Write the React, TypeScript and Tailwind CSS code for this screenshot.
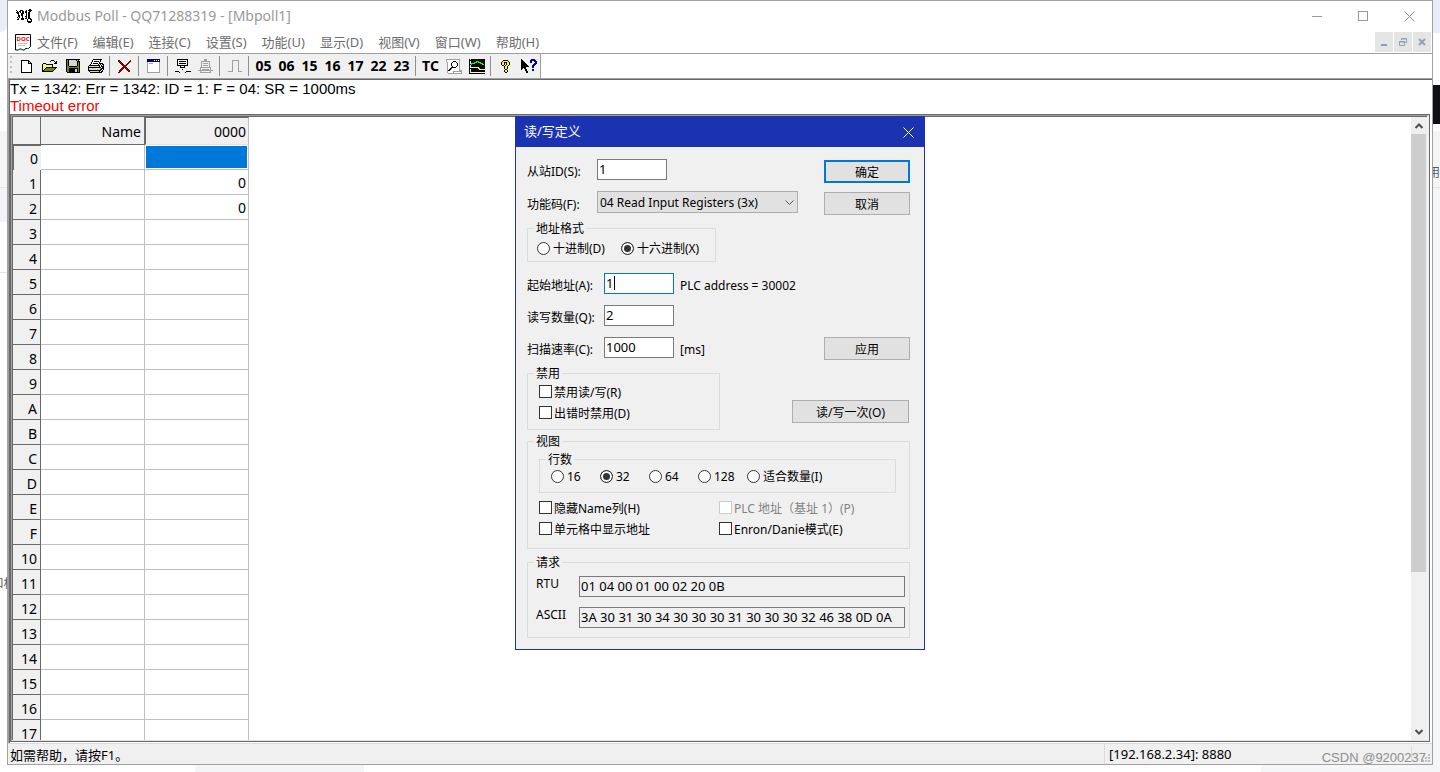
import type { ReactNode } from "react";

const PALETTE: Record<string, string> = {
  k: "#000000",
  w: "#ffffff",
  y: "#808000",
  Y: "#ffff00",
  g: "#a0a0a0",
  l: "#d4d4d4",
  r: "#800000",
  R: "#ff0000",
  b: "#000080",
  B: "#0000a8",
  c: "#008080",
  G: "#00ff00",
};

function PixelIcon({ rows }: { rows: string[] }) {
  const width = Math.max(...rows.map((r) => r.length));
  return (
    <svg
      width={width}
      height={rows.length}
      viewBox={`0 0 ${width} ${rows.length}`}
      shapeRendering="crispEdges"
      aria-hidden="true"
    >
      {rows.flatMap((row, y) =>
        row
          .split("")
          .map((ch, x) =>
            PALETTE[ch] ? (
              <rect key={`${x}-${y}`} x={x} y={y} width={1} height={1} fill={PALETTE[ch]} />
            ) : null
          )
      )}
    </svg>
  );
}

const APP_ICON = [
  ".............kk.",
  "k...kkk...k.kkkk",
  ".k.kk.kk.kk..kk.",
  "kkk.k.kk.kk.kk..",
  ".kk..kkk..k.kk..",
  "..k..kk...k.kk..",
  "..kk.kk...k.kk..",
  "..kk..k..kk.kk..",
  ".k.k..k...k.kk..",
  "..k..kkk.kk.kkk.",
  ".kk..kkk...kwwkk",
  "...........kwwwk",
  "...........kkkkk",
  "............kkk.",
];

const NEW_ICON = [
  "kkkkkkkk...",
  "kwwwwwwkk..",
  "kwwwwwwkwk.",
  "kwwwwwwkkkk",
  "kwwwwwwwwwk",
  "kwwwwwwwwwk",
  "kwwwwwwwwwk",
  "kwwwwwwwwwk",
  "kwwwwwwwwwk",
  "kwwwwwwwwwk",
  "kwwwwwwwwwk",
  "kwwwwwwwwwk",
  "kkkkkkkkkkk",
];

const OPEN_ICON = [
  ".........kkk....",
  "........k...k.k.",
  ".............kk.",
  ".kkk........kkk.",
  "kYwYkkkkkkk.....",
  "kwYwYwYwYwk.....",
  "kYwYwYwYwYk.....",
  "kwYwkkkkkkkkkkk.",
  "kYwkyyyyyyyyyk..",
  "kwkyyyyyyyyyk...",
  "kkyyyyyyyyyk....",
  "kkkkkkkkkkk.....",
];

const SAVE_ICON = [
  "kkkkkkkkkkkkkk",
  "kyklllllllklk.",
  "kykllllllllkkk",
  "kykllllllllkyk",
  "kykllllllllkyk",
  "kykllllllllkyk",
  "kykllllllllkyk",
  "kyykkkkkkkkyyk",
  "kyyyyyyyyyyyyk",
  "kyykkkkkkkkkyk",
  "kyykkkkkkllkyk",
  "kyykkkkkkllkyk",
  "kyykkkkkkllkyk",
  ".kkkkkkkkkkkkk",
];

const PRINT_ICON = [
  ".....kkkkkkkkk..",
  "....kwwwwwwwk...",
  "....kwkkkkkwk...",
  "...kwwwwwwwk....",
  "...kwkkkkkwkkkk.",
  "..kwwwwwwwk.k.kk",
  ".kkkkkkkkkkk.k.k",
  "kllllllllllk.kkk",
  "kkkkkkkkkkkkk.kk",
  "kllllllYYYlllkkk",
  "klllllllllllkk.k",
  "kkkkkkkkkkkkk.k.",
  ".klllllllllk.kk.",
  "..kkkkkkkkkkkk..",
];

const CUT_ICON = [
  "rr..........r.",
  "rrr........rr.",
  ".rrr......rr..",
  "..rrr....rr...",
  "...rrr..rr....",
  "....rrrrr.....",
  ".....rrr......",
  "....rrrrr.....",
  "...rrr.rrr....",
  "..rrr...rrr...",
  ".rrr.....rrr..",
  ".rr.......rr..",
  "rr............",
];

const WINDOW_ICON = [
  "bbbbbbbbbbbbb",
  "bbbbbbbwbwbwb",
  "bbbbbbbbbbbbb",
  "gwwwwwwwwwwwg",
  "gwggggwwwwwwg",
  "gwwwwwwwwwwwg",
  "gwwwwwwwwwwwg",
  "gwwwwwwwwwwwg",
  "gwwwwwwwwwwwg",
  "gwwwwwwwwwwwg",
  "gwwwwwwwwwwwg",
  "gwwwwwwwwwwwg",
  "gwwwwwwwwwwwg",
  "ggggggggggggg",
];

const CONNECT_ICON = [
  "..kkkkkkkkkkk...",
  "..k.........k...",
  "..k.kkkkkkk.k...",
  "..k.........k...",
  "..k.kkkkkkk.k...",
  "..k.........k...",
  "..kkkkkkkkkkk...",
  ".....k...k......",
  ".....kkkkk......",
  "................",
  ".......k........",
  "................",
  "kkkk.......kkkkk",
  "....k.....k.....",
];

const DISCONNECT_ICON = [
  "......ggg.......",
  "......ggg.......",
  "...ggggggggg....",
  "...g.......g....",
  "...g.ggggg.g....",
  "...g.......g....",
  "...g.ggggg.g....",
  "...g.......g....",
  "..ggggggggggg...",
  "..g.........g...",
  "..g.ggggggg.g...",
  "ggggggggggggggg.",
  "..g.........g...",
  "..ggggggggggg...",
];

const PULSE_ICON = [
  "....ggggggg...",
  "....g.....g...",
  "....g.....g...",
  "....g.....g...",
  "....g.....g...",
  "....g.....g...",
  "....g.....g...",
  "....g.....g...",
  "....g.....g...",
  "....g.....g...",
  "....g.....g...",
  "ggggg.....gggg",
];

const LOG_ICON = [
  "gggggggggggggg..",
  "gwwwwwwwwwwwwg..",
  "gwwwwwwkkkwwwg..",
  ".gwwwwkwwwkwwg..",
  ".gwwwkwwwwwkwg..",
  ".gwwwkwwwwwkwg..",
  ".gwwwkwwwwwkwg..",
  ".gwwwwkwwwkwwg..",
  ".gwwwkkkkkwwwg..",
  ".gwwkkwwwwwwwg..",
  ".gwkkwwwwwwwwg..",
  ".gkkwwwwwwwwwggg",
  ".gwwwwwggggggggg",
  ".gwwwwwgwwwwwwwg",
  "..gggggggggggggg",
];

const CHART_ICON = [
  "k.kkkkkkkkkkkkkk",
  "kkkkkkkkkkkkkkkk",
  "k.kkkkkGGGkkkkkk",
  "k.kkkGGGkGGGkkkk",
  "k.GGGGkkkkkGGGkk",
  "kkGkkkkkkkkkkGGk",
  "k.kkkkkkkkkkkkkk",
  "k.kkkkkkkkkkkkkk",
  "k.YYYYYYYYkkkkkk",
  "kkkkkkkkkYYkkkkk",
  "k.kkkkkkkkYYYYYY",
  "k.kkkkkkkkkkkkkk",
  "k.kkkkkkkkkkkkkk",
  "k...............",
  "kkkkkkkkkkkkkkkk",
];

const ABOUT_ICON = [
  "..kkkkk..",
  ".kYYYYYk.",
  "kYYkkkYYk",
  "kYYk.kYYk",
  "kYYk.kYYk",
  ".kk.kYYk.",
  "...kYYk..",
  "...kYYk..",
  "...kYYk..",
  "....kk...",
  "...kYYk..",
  "...kYYk..",
  "....kk...",
];

const HELP_ICON = [
  "k.........BBBB..",
  "kk.......BBBBBB.",
  "kkk......BB..BBB",
  "kkkk.....BB...BB",
  "kkkkk........BBB",
  "kkkkkk......BBB.",
  "kkkkkkk....BBB..",
  "kkkkkkkk...BB...",
  "kkkkk......BB...",
  "kk.kk...........",
  "k...kk.....BB...",
  "....kk.....BB...",
  ".....kk.........",
  ".....kk.........",
];

const MENU = [
  "文件(F)",
  "编辑(E)",
  "连接(C)",
  "设置(S)",
  "功能(U)",
  "显示(D)",
  "视图(V)",
  "窗口(W)",
  "帮助(H)",
];

const FUNCTION_CODES = ["05", "06", "15", "16", "17", "22", "23"];

function ToolButton({ label, children }: { label: string; children: ReactNode }) {
  return (
    <button
      type="button"
      aria-label={label}
      className="flex h-6 w-[23px] items-center justify-center text-sm font-bold text-black"
    >
      {children}
    </button>
  );
}

function ToolSeparator() {
  return <div className="mx-[2px] h-5 w-[2px] border-l border-[#909090]" />;
}

function TitleBar() {
  return (
    <header className="flex h-[30px] shrink-0 items-center pl-2">
      <PixelIcon rows={APP_ICON} />
      <h1 className="ml-[5px] flex-1 text-sm text-[#999999]">
        Modbus Poll - QQ71288319 - [Mbpoll1]
      </h1>
      <button type="button" aria-label="最小化" className="flex h-full w-[46px] items-center justify-center">
        <span className="h-px w-[10px] bg-[#999999]" />
      </button>
      <button type="button" aria-label="最大化" className="flex h-full w-[46px] items-center justify-center">
        <span className="size-[10px] border border-[#999999]" />
      </button>
      <button type="button" aria-label="关闭" className="flex h-full w-[46px] items-center justify-center">
        <svg width="11" height="11" viewBox="0 0 11 11" stroke="#8c8c8c" fill="none">
          <path d="M0.5 0.5l10 10M10.5 0.5l-10 10" />
        </svg>
      </button>
    </header>
  );
}

function MenuBar() {
  return (
    <nav className="flex h-[23px] shrink-0 items-center border-b border-[#a0a0a0] pl-[7px]">
      <svg width="16" height="17" viewBox="0 0 16 17" aria-hidden="true">
        <path d="M0.5 0.5h15v12l-2 2h-3l-1 1.5h-2l-1-1h-2l-1 1h-3z" fill="#fff" stroke="#000" />
        <path d="M3 9.5h9M3 11.5h7" stroke="#c0c0c0" />
        <path d="M12 14.5h2" stroke="#008080" />
        <text x="8" y="7" fontSize="6" fontWeight="700" textAnchor="middle" fill="#ff0000">
          DOC
        </text>
      </svg>
      <div className="flex flex-1 gap-[3px]">
        {MENU.map((item) => (
          <button key={item} type="button" className="px-[6px] text-[13px] leading-5 text-[#6d6d6d]">
            {item}
          </button>
        ))}
      </div>
      <div className="flex gap-px pr-px">
        <button type="button" aria-label="最小化文档" className="flex h-5 w-[18px] items-center justify-center bg-[#e5e5e5]">
          <svg width="8" height="8" viewBox="0 0 8 8">
            <path d="M1 6h6v2h-6z" fill="#91a1b5" />
          </svg>
        </button>
        <button type="button" aria-label="还原文档" className="flex h-5 w-[18px] items-center justify-center bg-[#e5e5e5]">
          <svg width="8" height="8" viewBox="0 0 8 8" fill="none" stroke="#91a1b5">
            <path d="M2.5 2v-1.5h5v4h-1.5M2 1h6M0 4h6M0.5 3.5h5v4h-5z" />
          </svg>
        </button>
        <button type="button" aria-label="关闭文档" className="flex h-5 w-[18px] items-center justify-center bg-[#e5e5e5]">
          <svg width="8" height="8" viewBox="0 0 8 8" stroke="#91a1b5" strokeWidth="2">
            <path d="M1 1l6 6M7 1l-6 6" />
          </svg>
        </button>
      </div>
    </nav>
  );
}

function Toolbar() {
  return (
    <div className="flex h-6 shrink-0">
      <div className="flex items-center border-r border-[#a0a0a0] bg-[#f0f0f0]">
        <div className="ml-[2px] mr-[3px] h-5 w-[2px] bg-[repeating-linear-gradient(#c0c0c0_0_2px,#f0f0f0_2px_5px)]" />
        <ToolButton label="新建"><PixelIcon rows={NEW_ICON} /></ToolButton>
        <ToolButton label="打开"><PixelIcon rows={OPEN_ICON} /></ToolButton>
        <ToolButton label="保存"><PixelIcon rows={SAVE_ICON} /></ToolButton>
        <ToolButton label="打印"><PixelIcon rows={PRINT_ICON} /></ToolButton>
        <ToolSeparator />
        <ToolButton label="删除"><PixelIcon rows={CUT_ICON} /></ToolButton>
        <ToolSeparator />
        <ToolButton label="读写定义"><PixelIcon rows={WINDOW_ICON} /></ToolButton>
        <ToolSeparator />
        <ToolButton label="连接"><PixelIcon rows={CONNECT_ICON} /></ToolButton>
        <ToolButton label="断开"><PixelIcon rows={DISCONNECT_ICON} /></ToolButton>
        <ToolSeparator />
        <ToolButton label="脉冲"><PixelIcon rows={PULSE_ICON} /></ToolButton>
        <ToolSeparator />
        {FUNCTION_CODES.map((code) => (
          <ToolButton key={code} label={code}>{code}</ToolButton>
        ))}
        <ToolSeparator />
        <ToolButton label="TC">TC</ToolButton>
        <ToolButton label="通讯记录"><PixelIcon rows={LOG_ICON} /></ToolButton>
        <ToolButton label="图表"><PixelIcon rows={CHART_ICON} /></ToolButton>
        <ToolSeparator />
        <ToolButton label="关于"><PixelIcon rows={ABOUT_ICON} /></ToolButton>
        <ToolButton label="帮助"><PixelIcon rows={HELP_ICON} /></ToolButton>
      </div>
    </div>
  );
}

const ROW_COUNT = 24;

function RegisterTable() {
  const rows = Array.from({ length: ROW_COUNT }, (_, i) => i);
  return (
    <table className="table-fixed border-separate border-spacing-0 self-start text-right text-sm leading-5 text-black">
      <colgroup>
        <col className="w-7" />
        <col className="w-[104px]" />
        <col className="w-[104px]" />
      </colgroup>
      <thead>
        <tr className="h-7 bg-[#f0f0f0]">
          <th className="border-b border-r border-[#696969]" />
          <th className="border-b border-r border-[#696969] pr-[3px] pt-[2px] font-normal">Name</th>
          <th className="border-b border-l border-r border-t border-b-[#e3e3e3] border-l-[#696969] border-r-[#c0c0c0] border-t-[#696969] pr-[2px] pt-[2px] font-normal">
            0000
          </th>
        </tr>
      </thead>
      <tbody>
        {rows.map((i) => (
          <tr key={i} className="h-[25px]">
            <th
              className={`bg-[#f0f0f0] pr-[3px] font-normal leading-5 ${
                i === 0
                  ? "border-l border-t border-[#696969] pt-[2px]"
                  : "border-b border-r border-[#696969] pt-[4px]"
              }`}
            >
              {i.toString(16).toUpperCase()}
            </th>
            <td className="border-b border-r border-[#c0c0c0]" />
            <td className="border-b border-r border-[#c0c0c0] p-px">
              {i === 0 ? (
                <div className="h-[22px] bg-[#0078d7]" />
              ) : (
                <span className="block h-[22px] pr-px pt-[2px]">{i < 3 ? "0" : ""}</span>
              )}
            </td>
          </tr>
        ))}
      </tbody>
    </table>
  );
}

function ScrollBar() {
  return (
    <div className="flex w-4 shrink-0 flex-col bg-[#f0f0f0]">
      <button type="button" aria-label="向上滚动" className="flex h-[17px] w-full items-center justify-center">
        <svg width="8" height="6" viewBox="0 0 8 6" fill="none" stroke="#505050" strokeWidth="2">
          <path d="M0.5 5L4 1.5L7.5 5" />
        </svg>
      </button>
      <div className="mr-px flex-[437] bg-[#cdcdcd]" />
      <div className="flex-[151]" />
      <button type="button" aria-label="向下滚动" className="flex h-[17px] w-full items-center justify-center">
        <svg width="8" height="6" viewBox="0 0 8 6" fill="none" stroke="#505050" strokeWidth="2">
          <path d="M0.5 1L4 4.5L7.5 1" />
        </svg>
      </button>
    </div>
  );
}

function Radio({ name, label, checked = false }: { name: string; label: string; checked?: boolean }) {
  return (
    <label className="flex items-center gap-[3px] whitespace-nowrap">
      <input
        type="radio"
        name={name}
        defaultChecked={checked}
        className="size-[13px] shrink-0 appearance-none rounded-full border border-[#333333] bg-white checked:bg-[#333333] checked:shadow-[inset_0_0_0_2px_#ffffff]"
      />
      <span className="pt-px">{label}</span>
    </label>
  );
}

function Check({ label, disabled = false }: { label: string; disabled?: boolean }) {
  return (
    <label className={`flex h-[21px] items-center gap-[2px] whitespace-nowrap ${disabled ? "text-[#838383]" : ""}`}>
      <input
        type="checkbox"
        disabled={disabled}
        className="size-[13px] shrink-0 appearance-none border border-[#333333] bg-white checked:bg-[#333333] disabled:border-[#cccccc]"
      />
      <span className="pt-[2px]">{label}</span>
    </label>
  );
}

function Group({ title, className, children }: { title: string; className: string; children: ReactNode }) {
  return (
    <fieldset className={`border border-[#dcdcdc] ${className}`}>
      <legend className="ml-[6px] px-[2px] pt-[2px] leading-[14px]">{title}</legend>
      {children}
    </fieldset>
  );
}

function DialogButton({ className = "", children }: { className?: string; children: ReactNode }) {
  return (
    <button
      type="button"
      className={`h-[23px] bg-[#e1e1e1] pt-[2px] ${className || "w-[86px] border border-[#adadad]"}`}
    >
      {children}
    </button>
  );
}

function NumberField({
  id,
  label,
  value,
  focused = false,
  after,
}: {
  id: string;
  label: string;
  value: string;
  focused?: boolean;
  after?: string;
}) {
  return (
    <div className="flex h-[21px] items-center whitespace-nowrap">
      <label htmlFor={id} className="w-[77px] shrink-0 pt-[5px]">
        {label}
      </label>
      <div className="relative shrink-0">
        <input
          id={id}
          defaultValue={value}
          className={`block h-[21px] w-[70px] border bg-white px-px pb-px text-[13px] outline-none ${
            focused ? "border-[#0078d7]" : "border-[#7a7a7a]"
          }`}
        />
        {focused && <span className="absolute left-[10px] top-[3px] h-[14px] w-px bg-black" />}
      </div>
      {after && <span className="ml-[6px] pt-1">{after}</span>}
    </div>
  );
}

function RequestField({ id, label, value }: { id: string; label: string; value: string }) {
  return (
    <div className="flex h-[21px] items-center">
      <label htmlFor={id} className="w-[43px] pb-[6px]">
        {label}
      </label>
      <input
        id={id}
        readOnly
        defaultValue={value}
        className="h-[21px] min-w-0 flex-1 border border-[#7a7a7a] bg-[#f0f0f0] px-px pb-px text-[13px] outline-none"
      />
    </div>
  );
}

function DefinitionDialog() {
  return (
    <section
      role="dialog"
      aria-label="读/写定义"
      className="w-[410px] border border-[#1b33b1] bg-[#f0f0f0] text-xs text-black"
    >
      <div className="flex h-[30px] items-center bg-[#1b33b1] pl-2 text-[13px] text-white">
        <h2 className="flex-1">读/写定义</h2>
        <button type="button" aria-label="关闭" className="flex h-full w-[31px] items-center justify-center">
          <svg width="11" height="11" viewBox="0 0 11 11" stroke="#ffffff" fill="none">
            <path d="M0.5 0.5l10 10M10.5 0.5l-10 10" />
          </svg>
        </button>
      </div>

      <form className="flex flex-col pb-[11px] pl-[11px] pr-[14px] pt-3">
        <div className="flex">
          <div className="flex w-0 flex-1 flex-col">
            <div className="flex h-[21px] items-center">
              <label htmlFor="slave-id" className="w-[70px] shrink-0 pt-[5px]">
                从站ID(S):
              </label>
              <input
                id="slave-id"
                defaultValue="1"
                className="h-[21px] w-[70px] border border-[#7a7a7a] bg-white px-px pb-px text-[13px] outline-none"
              />
            </div>
            <div className="mt-[11px] flex h-[22px] items-center">
              <label htmlFor="function-code" className="w-[70px] shrink-0 pt-[5px]">
                功能码(F):
              </label>
              <div className="relative shrink-0">
                <select
                  id="function-code"
                  className="block h-[22px] w-[201px] appearance-none border border-[#adadad] bg-[#e1e1e1] px-[2px] pt-px text-xs outline-none"
                >
                  <option>04 Read Input Registers (3x)</option>
                </select>
                <svg
                  width="9"
                  height="6"
                  viewBox="0 0 9 6"
                  fill="none"
                  stroke="#555555"
                  className="pointer-events-none absolute right-1 top-[9px]"
                >
                  <path d="M0.5 0.5l4 4l4 -4" />
                </svg>
              </div>
            </div>

            <Group title="地址格式" className="mt-[7px] h-[42px] w-[189px]">
              <div className="flex gap-4 pl-[9px] pt-1">
                <Radio name="format" label="十进制(D)" />
                <Radio name="format" label="十六进制(X)" checked />
              </div>
            </Group>

            <div className="mt-[11px] flex flex-col gap-[11px]">
              <NumberField id="address" label="起始地址(A):" value="1" focused after="PLC address = 30002" />
              <NumberField id="quantity" label="读写数量(Q):" value="2" />
              <NumberField id="scan-rate" label="扫描速率(C):" value="1000" after="[ms]" />
            </div>

            <Group title="禁用" className="mt-[7px] h-[65px] w-[193px]">
              <div className="flex flex-col pl-[11px]">
                <Check label="禁用读/写(R)" />
                <Check label="出错时禁用(D)" />
              </div>
            </Group>
          </div>

          <div className="flex shrink-0 flex-col items-end pt-px">
            <DialogButton className="w-[86px] border-2 border-[#0078d7]">确定</DialogButton>
            <div className="mt-[9px] flex">
              <DialogButton>取消</DialogButton>
            </div>
            <div className="mt-[122px] flex">
              <DialogButton>应用</DialogButton>
            </div>
            <div className="mr-px mt-10 flex">
              <DialogButton className="w-[117px] border border-[#adadad]">读/写一次(O)</DialogButton>
            </div>
          </div>
        </div>

        <Group title="视图" className="mt-[3px] h-[116px]">
          <div className="pl-[11px] pr-[13px]">
            <Group title="行数" className="mt-[2px] h-[42px]">
              <div className="flex pl-[11px] pt-px">
                <div className="w-[49px]"><Radio name="rows" label="16" /></div>
                <div className="w-[49px]"><Radio name="rows" label="32" checked /></div>
                <div className="w-[49px]"><Radio name="rows" label="64" /></div>
                <div className="w-[49px]"><Radio name="rows" label="128" /></div>
                <Radio name="rows" label="适合数量(I)" />
              </div>
            </Group>
            <div className="mt-1 grid grid-cols-[180px_1fr]">
              <Check label="隐藏Name列(H)" />
              <Check label="PLC 地址（基址 1）(P)" disabled />
              <Check label="单元格中显示地址" />
              <Check label="Enron/Danie模式(E)" />
            </div>
          </div>
        </Group>

        <Group title="请求" className="mt-[5px] h-[84px]">
          <div className="flex flex-col gap-[10px] pl-2 pr-1 pt-[6px]">
            <RequestField id="rtu" label="RTU" value="01 04 00 01 00 02 20 0B" />
            <RequestField
              id="ascii"
              label="ASCII"
              value="3A 30 31 30 34 30 30 30 31 30 30 30 32 46 38 0D 0A"
            />
          </div>
        </Group>
      </form>
    </section>
  );
}

function StatusBar() {
  return (
    <footer className="flex h-[21px] shrink-0 items-center border-t border-[#dcdcdc] bg-[#f0f0f0] text-[13px] leading-5 text-black">
      <span className="flex-1 pl-[2px] pt-px">如需帮助，请按F1。</span>
      <span className="w-[307px] border-l border-[#dcdcdc] pl-1">[192.168.2.34]: 8880</span>
      <span className="flex h-4 w-[21px] items-end justify-end border-l border-[#dcdcdc] pr-[2px]">
        <svg width="8" height="8" viewBox="0 0 8 8" fill="#bfbfbf" aria-hidden="true">
          <path d="M6 0h2v2h-2zM3 3h2v2h-2zM6 3h2v2h-2zM0 6h2v2h-2zM3 6h2v2h-2zM6 6h2v2h-2z" />
        </svg>
      </span>
    </footer>
  );
}

export default function App() {
  return (
    <div className="flex h-screen flex-col overflow-hidden bg-white font-['Noto_Sans','Noto_Sans_CJK_SC',sans-serif]">
      <div className="flex min-h-0 flex-1">
        {/* 窗口后面的网页，左侧 */}
        <div className="flex w-[7px] shrink-0 flex-col overflow-hidden text-xs text-[#555566]">
          <div className="h-8 rounded-br-full bg-[#eaecf8]" />
          <div className="mt-[99px] h-[57px] border-b border-[#e5e5e5] bg-[#f5f5f6]" />
          <div className="h-[34px] bg-[#f3f4f7]" />
          <div className="mt-[50px] h-px bg-[#e5e5e5]" />
          <div className="mt-[303px] flex justify-center whitespace-nowrap leading-4">和相</div>
        </div>

        <main className="flex min-w-0 flex-1 flex-col border border-[#a0a0a5] bg-white">
          <TitleBar />
          <MenuBar />
          <Toolbar />
          <div className="flex min-h-0 flex-1 flex-col border-l border-t border-[#a0a0a0]">
            <div className="flex min-h-0 flex-1 flex-col border-l border-t border-[#696969]">
              <div className="h-[34px] shrink-0 font-['Liberation_Sans',sans-serif] text-[15px] leading-[17px]">
                <p className="text-black">Tx = 1342: Err = 1342: ID = 1: F = 04: SR = 1000ms</p>
                <p className="text-[#ff0000]">Timeout error</p>
              </div>
              <div className="relative mb-px mr-[2px] flex min-h-0 flex-1 border border-[#696969]">
                <div className="flex min-w-0 flex-1 border-b border-l border-r-2 border-t border-b-[#e3e3e3] border-l-[#a0a0a0] border-r-[#f0f0f0] border-t-[#a0a0a0]">
                  <div className="flex min-w-0 flex-1 border-l border-t border-[#696969]">
                    <div className="flex min-w-0 flex-1 overflow-hidden">
                      <RegisterTable />
                    </div>
                    <ScrollBar />
                  </div>
                </div>
                <div className="absolute inset-x-0 top-px flex justify-center">
                  <DefinitionDialog />
                </div>
              </div>
            </div>
          </div>
          <StatusBar />
        </main>

        {/* 窗口后面的网页，右侧 */}
        <div className="flex w-[7px] shrink-0 flex-col overflow-hidden text-xs text-[#555566]">
          <div className="h-[33px] bg-[#e8ecf9]" />
          <div className="mt-[52px] h-[39px] bg-[#101014]" />
          <div className="mt-[7px] flex h-[57px] items-end justify-end border-b border-[#e5e5e5] bg-[#f5f5f6] pb-[6px]">
            用
          </div>
          <div className="flex-1 bg-[#f5f6f7]" />
        </div>
      </div>
      <div className="flex h-[7px] shrink-0 bg-white">
        <div className="w-[195px]" />
        <div className="w-[169px] bg-[#f3f5f7]" />
        <div className="flex-1" />
        <div className="w-[179px] bg-[#f5f6f8]" />
      </div>
      <span className="absolute bottom-1 right-[14px] font-['Liberation_Sans',sans-serif] text-[13px] leading-5 text-[#8e8e8e]">
        CSDN @9200237
      </span>
    </div>
  );
}
